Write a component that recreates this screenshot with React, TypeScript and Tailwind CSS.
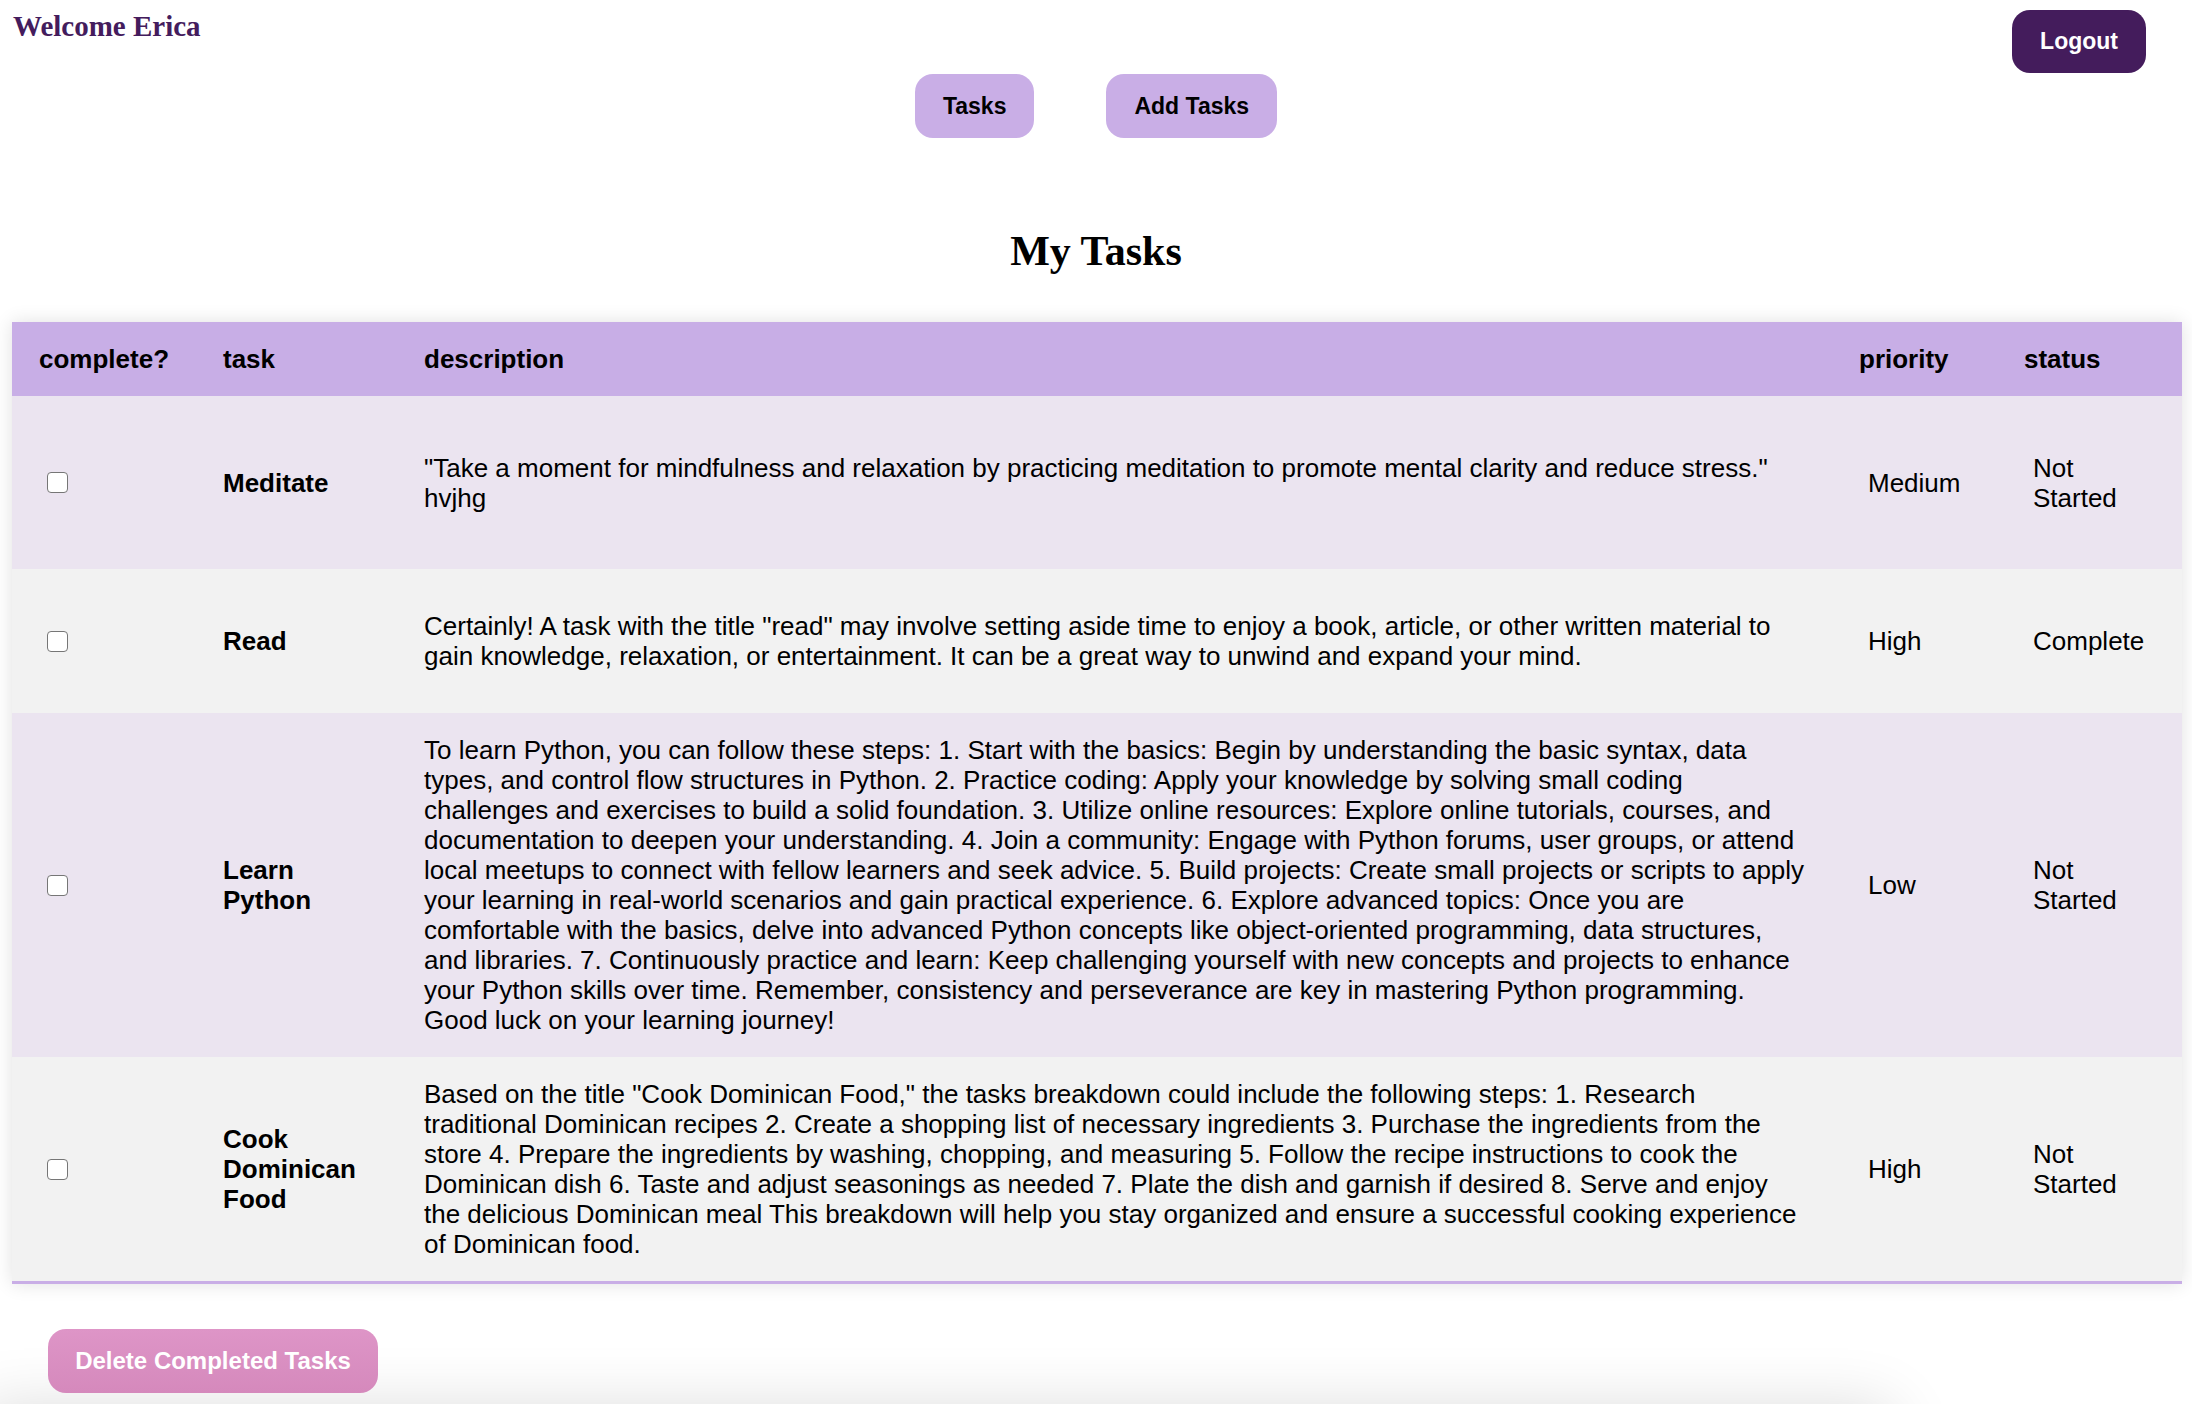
import React from "react";

interface Task {
  title: string;
  description: string;
  priority: string;
  status: string;
}

const tasks: Task[] = [
  {
    title: "Meditate",
    description:
      "\"Take a moment for mindfulness and relaxation by practicing meditation to promote mental clarity and reduce stress.\" hvjhg",
    priority: "Medium",
    status: "Not Started",
  },
  {
    title: "Read",
    description:
      "Certainly! A task with the title \"read\" may involve setting aside time to enjoy a book, article, or other written material to gain knowledge, relaxation, or entertainment. It can be a great way to unwind and expand your mind.",
    priority: "High",
    status: "Complete",
  },
  {
    title: "Learn Python",
    description:
      "To learn Python, you can follow these steps: 1. Start with the basics: Begin by understanding the basic syntax, data types, and control flow structures in Python. 2. Practice coding: Apply your knowledge by solving small coding challenges and exercises to build a solid foundation. 3. Utilize online resources: Explore online tutorials, courses, and documentation to deepen your understanding. 4. Join a community: Engage with Python forums, user groups, or attend local meetups to connect with fellow learners and seek advice. 5. Build projects: Create small projects or scripts to apply your learning in real-world scenarios and gain practical experience. 6. Explore advanced topics: Once you are comfortable with the basics, delve into advanced Python concepts like object-oriented programming, data structures, and libraries. 7. Continuously practice and learn: Keep challenging yourself with new concepts and projects to enhance your Python skills over time. Remember, consistency and perseverance are key in mastering Python programming. Good luck on your learning journey!",
    priority: "Low",
    status: "Not Started",
  },
  {
    title: "Cook Dominican Food",
    description:
      "Based on the title \"Cook Dominican Food,\" the tasks breakdown could include the following steps: 1. Research traditional Dominican recipes 2. Create a shopping list of necessary ingredients 3. Purchase the ingredients from the store 4. Prepare the ingredients by washing, chopping, and measuring 5. Follow the recipe instructions to cook the Dominican dish 6. Taste and adjust seasonings as needed 7. Plate the dish and garnish if desired 8. Serve and enjoy the delicious Dominican meal This breakdown will help you stay organized and ensure a successful cooking experience of Dominican food.",
    priority: "High",
    status: "Not Started",
  },
];

const rowClasses = [
  "bg-[#ebe4f0] h-[173px]",
  "bg-[#f2f2f2] h-[144px]",
  "bg-[#ebe4f0]",
  "bg-[#f2f2f2]",
];

function NavButton({ children }: { children: React.ReactNode }) {
  return (
    <button className="h-[64px] px-[28px] rounded-[18px] bg-[#c9aee6] text-black text-[23px] font-bold">
      {children}
    </button>
  );
}

export default function App() {
  return (
    <div className="h-[1404px] bg-white text-black font-['Liberation_Sans',Arial,sans-serif] overflow-hidden">
      <div className="flex justify-between items-start pt-[10px]">
        <h1 className="pl-[13px] text-[29px] leading-[33px] font-bold text-[#441c5d] font-['Liberation_Serif','Times_New_Roman',serif]">
          Welcome Erica
        </h1>
        <button className="mr-[46px] h-[63px] px-[28px] rounded-[18px] bg-[#441c5c] text-white text-[23px] font-bold">
          Logout
        </button>
      </div>

      <div className="flex justify-center gap-[72px] mt-[1px]">
        <NavButton>Tasks</NavButton>
        <NavButton>Add Tasks</NavButton>
      </div>

      <h2 className="mt-[90px] text-center text-[42px] leading-[47px] font-bold font-['Liberation_Serif','Times_New_Roman',serif]">
        My Tasks
      </h2>

      <div className="mt-[47px] ml-[12px] mr-[10px] shadow-[0_0_18px_rgba(0,0,0,0.12)]">
        <table className="w-full table-fixed border-collapse text-[26px] leading-[30px] border-b-[3px] border-[#c9aee6]">
          <thead>
            <tr className="bg-[#c8aee6] h-[74px] text-left">
              <th className="w-[189px] pl-[27px] font-bold">complete?</th>
              <th className="w-[201px] pl-[22px] font-bold">task</th>
              <th className="w-[1435px] pl-[22px] font-bold">description</th>
              <th className="w-[165px] pl-[22px] font-bold">priority</th>
              <th className="w-[180px] pl-[22px] font-bold">status</th>
            </tr>
          </thead>
          <tbody>
            {tasks.map((task, i) => (
              <tr key={task.title} className={rowClasses[i]}>
                <td className="pl-[35px] py-[22px] align-middle">
                  <input
                    type="checkbox"
                    className="appearance-none block w-[21px] h-[21px] rounded-[4px] border-[1.5px] border-[#767676] bg-white"
                  />
                </td>
                <td className="px-[22px] py-[22px] align-middle font-bold">
                  {task.title}
                </td>
                <td className="pl-[22px] pr-[30px] py-[22px] align-middle">
                  {task.description}
                </td>
                <td className="pl-[31px] pr-[12px] py-[22px] align-middle">
                  {task.priority}
                </td>
                <td className="pl-[31px] pr-[22px] py-[22px] align-middle">
                  {task.status}
                </td>
              </tr>
            ))}
          </tbody>
        </table>
      </div>

      <button className="mt-[45px] ml-[48px] h-[64px] w-[330px] rounded-[18px] bg-gradient-to-b from-[#de95c7] to-[#d589bc] text-white text-[24px] font-bold">
        Delete Completed Tasks
      </button>

      <div className="mt-[14px] ml-[-20px] mr-[300px] h-[200px] bg-white shadow-[0_0_60px_rgba(0,0,0,0.14)]" />
    </div>
  );
}
